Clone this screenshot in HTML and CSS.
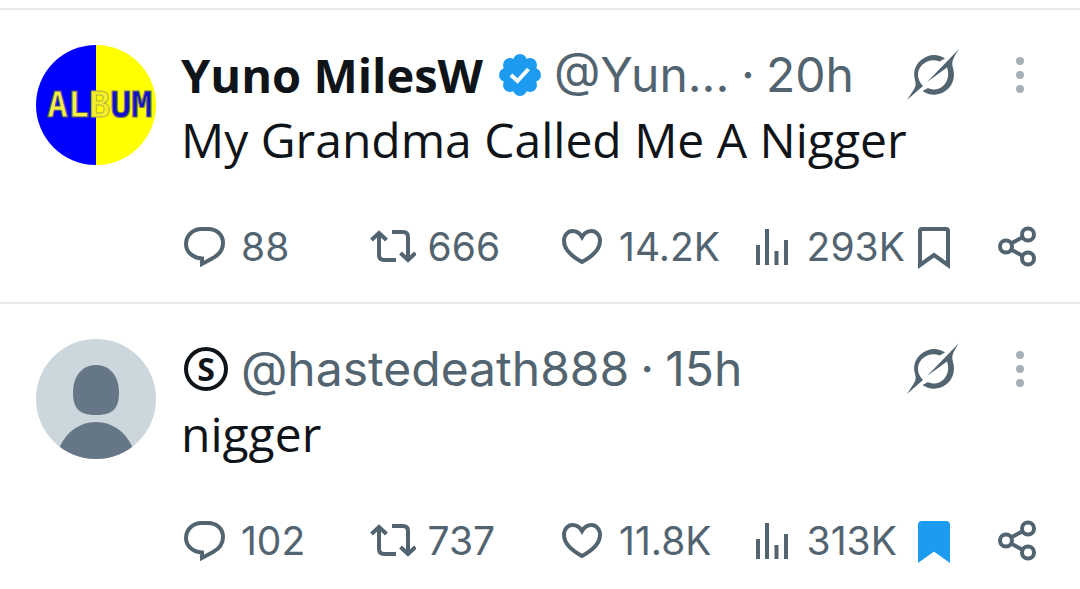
FILE: index.html
```html
<!DOCTYPE html>
<html lang="en">
<head>
    <meta charset="UTF-8" />
    <meta name="viewport" content="width=device-width, initial-scale=1.0"/>
    <title>Posts</title>
    <link rel="stylesheet" href="styles.css">
</head>
<body>
    <!-- ===== SHARED ICONS ===== -->
    <svg class="sprite" aria-hidden="true">
        <symbol id="reply" viewBox="0 0 48 48">
            <path d="M21 41V35.600C11 34.600 5 28.500 5 21C5 12.500 12 6 20.500 6H27C36 6 42 12 42 20C42 27 38.500 31.500 32 35Z" fill="none" stroke="currentColor" stroke-width="4"/>
        </symbol>
        <symbol id="repost" viewBox="0 0 48 48">
            <path d="M11 10V32Q11 37 16 37H28M3.500 17L11 10L18.500 17M24 9H35Q40 9 40 14V37M32.500 30L40 37L47.500 30" fill="none" stroke="currentColor" stroke-width="4"/>
        </symbol>
        <symbol id="heart" viewBox="0 0 48 48">
            <path d="M23 39C12 33 5 26 5 18C5 12 9 8 13.500 8C18 8 21 10.500 23 14C25 10.500 28 8 32.500 8C37 8 41 12 41 18C41 26 34 33 23 39Z" fill="none" stroke="currentColor" stroke-width="4"/>
        </symbol>
        <symbol id="views" viewBox="0 0 44 48">
            <path d="M7 42V22M16 42V6M25.500 42V28M35 42V17" fill="none" stroke="currentColor" stroke-width="4"/>
        </symbol>
        <symbol id="bookmark" viewBox="0 0 48 48">
            <path d="M4 42V8Q4 6 6 6H30Q32 6 32 8V42L18 32Z" stroke="currentColor" stroke-width="4"/>
        </symbol>
        <symbol id="share" viewBox="0 0 48 48">
            <path d="M14 21L27 14M14 26L27 33" stroke="currentColor" stroke-width="4"/>
            <g fill="none" stroke="currentColor" stroke-width="4">
                <circle cx="10" cy="23.500" r="6"/><circle cx="32" cy="11.500" r="6"/><circle cx="32" cy="35.500" r="6"/>
            </g>
        </symbol>
        <symbol id="grok" viewBox="0 0 52 52">
            <path d="M38 9.500C33 6 26 5 20 7.500C10 11.500 5 21 8 31C9 35 9 37 6.500 41L0 51L16 37C10 31 9 22 15 16C20 11 27 10 32.500 12.500Z"/>
            <path d="M20 33L52 0C46 9 44 13 46 19C49 29 45 39 36 43.500C29 47 21 46 15.500 42L21 39C26 41.500 32 41 36.500 36.500C41 32 42.500 25 40 18.500Z"/>
        </symbol>
        <symbol id="more" viewBox="0 0 12 40">
            <circle cx="6" cy="6" r="4"/><circle cx="6" cy="20" r="4"/><circle cx="6" cy="34" r="4"/>
        </symbol>
    </svg>

    <main class="feed">
        <article class="post">
            <a href="#" class="avatar" aria-label="Yuno MilesW">
                <svg viewBox="0 0 120 120">
                    <path d="M60 0A60 60 0 0 0 60 120Z" fill="#00f"/>
                    <path d="M60 0A60 60 0 0 1 60 120Z" fill="#ff0"/>
                    <text class="album" x="11" y="72"><tspan class="on-blue">AL</tspan><tspan class="on-seam">B</tspan><tspan class="on-yellow">UM</tspan></text>
                </svg>
            </a>
            <div class="content">
                <header class="post-head">
                    <a href="#" class="name">Yuno MilesW</a>
                    <svg class="verified" viewBox="0 0 42 42" role="img" aria-label="Verified">
                        <g fill="#1d9bf0">
                            <circle cx="21" cy="21" r="17"/>
                            <circle cx="21" cy="7" r="7"/><circle cx="31" cy="11" r="7"/><circle cx="35" cy="21" r="7"/><circle cx="31" cy="31" r="7"/>
                            <circle cx="21" cy="35" r="7"/><circle cx="11" cy="31" r="7"/><circle cx="7" cy="21" r="7"/><circle cx="11" cy="11" r="7"/>
                        </g>
                        <path d="M12 21L18.500 27L29.500 15" fill="none" stroke="#fff" stroke-width="4"/>
                    </svg>
                    <a href="#" class="handle handle-cut">@Yun...</a>
                    <span class="dot">·</span>
                    <time class="time">20h</time>
                    <button class="grok" aria-label="Explain this post"><svg><use href="#grok"/></svg></button>
                    <button class="more" aria-label="More"><svg><use href="#more"/></svg></button>
                </header>
                <p class="text">My Grandma Called Me A Nigger</p>
                <div class="actions">
                    <button aria-label="Reply"><svg><use href="#reply"/></svg>88</button>
                    <button aria-label="Repost"><svg><use href="#repost"/></svg>666</button>
                    <button aria-label="Like"><svg><use href="#heart"/></svg>14.2K</button>
                    <button class="views" aria-label="Views"><svg><use href="#views"/></svg>293K</button>
                    <button class="save" aria-label="Bookmark"><svg><use href="#bookmark"/></svg></button>
                    <button aria-label="Share"><svg><use href="#share"/></svg></button>
                </div>
            </div>
        </article>

        <article class="post">
            <a href="#" class="avatar" aria-label="hastedeath888">
                <svg viewBox="0 0 120 120">
                    <clipPath id="round"><circle cx="60" cy="60" r="60"/></clipPath>
                    <g clip-path="url(#round)">
                        <path d="M0 0H120V120H0Z" fill="#ccd6dd"/>
                        <path d="M60 26C74 26 83 37 83 54C83 69 77 76 60 76C43 76 37 69 37 54C37 37 46 26 60 26Z" fill="#657786"/>
                        <path d="M20 120C24 98 40 83 60 83C80 83 96 98 100 120Z" fill="#657786"/>
                    </g>
                </svg>
            </a>
            <div class="content">
                <header class="post-head">
                    <a href="#" class="name name-badge">S</a>
                    <a href="#" class="handle">@hastedeath888</a>
                    <span class="dot">·</span>
                    <time class="time">15h</time>
                    <button class="grok" aria-label="Explain this post"><svg><use href="#grok"/></svg></button>
                    <button class="more" aria-label="More"><svg><use href="#more"/></svg></button>
                </header>
                <p class="text">nigger</p>
                <div class="actions">
                    <button aria-label="Reply"><svg><use href="#reply"/></svg>102</button>
                    <button aria-label="Repost"><svg><use href="#repost"/></svg>737</button>
                    <button aria-label="Like"><svg><use href="#heart"/></svg>11.8K</button>
                    <button class="views" aria-label="Views"><svg><use href="#views"/></svg>313K</button>
                    <button class="save saved" aria-label="Bookmark"><svg><use href="#bookmark"/></svg></button>
                    <button aria-label="Share"><svg><use href="#share"/></svg></button>
                </div>
            </div>
        </article>
    </main>
</body>
</html>
```

FILE: styles.css
```css
*{box-sizing:border-box;}
body{
    margin:0;background:#fff;color:#0f1419;
    font-family:"Open Sans","Noto Sans",sans-serif;
}
a{color:inherit;text-decoration:none;}
button{
    padding:0;border:none;background:none;
    color:#536471;font:inherit;cursor:pointer;
}
svg{display:block;fill:currentColor;}
.sprite{display:none;}
.feed{padding-top:8px;}

.post{
    display:flex;gap:25px;
    padding:35px 36px 11px;
    border-top:2px solid #e6eaed;
}
.post + .post{margin-top:20px;}
.avatar{flex:none;width:120px;height:120px;}
.avatar svg{width:100%;height:100%;}
.album{
    font:bold 35px "DejaVu Sans Mono",monospace;
    stroke-width:1px;
}
.on-blue{fill:#f5ef4a;stroke:#55556a;}
.on-seam{fill:#f5ef2a;stroke:#b5b04a;}
.on-yellow{fill:#1212c8;stroke:#77775a;}
.content{flex:1;min-width:0;}

/* name row */
.post-head{
    display:flex;align-items:center;
    height:60px;white-space:nowrap;
}
.name{font-size:47px;font-weight:700;line-height:60px;}
.name-badge{
    display:flex;align-items:center;justify-content:center;
    width:44px;height:44px;margin-left:3px;
    border:4px solid #0f1419;border-radius:50%;
    font-size:32px;line-height:36px;
}
.verified{width:42px;height:42px;margin-left:16px;}
.handle,.dot,.time{
    color:#536471;font-family:Inter,sans-serif;
    font-size:48px;line-height:60px;
}
.handle{margin-left:13px;}
.handle-cut{min-width:176px;}
.dot{width:36px;text-align:center;}
.grok{margin-left:auto;}
.grok svg{width:52px;height:52px;}
.more{margin:0 18px 0 55px;color:#a6b0b7;}
.more svg{width:12px;height:40px;}

.text{margin:0;font-size:48px;line-height:70px;}

/* counters */
.actions{
    display:grid;align-items:center;
    grid-template-columns:187fr 192fr 192fr 166fr 80fr 42fr;
    height:48px;margin-top:48px;
}
.actions button{
    display:flex;align-items:center;gap:12px;
    font-family:Inter,sans-serif;font-size:39px;line-height:48px;
}
.actions svg{flex:none;width:48px;height:48px;}
.actions .views svg{width:44px;}
.save svg{fill:none;}
.saved svg{fill:currentColor;}
.actions .saved{color:#1d9bf0;}
```
